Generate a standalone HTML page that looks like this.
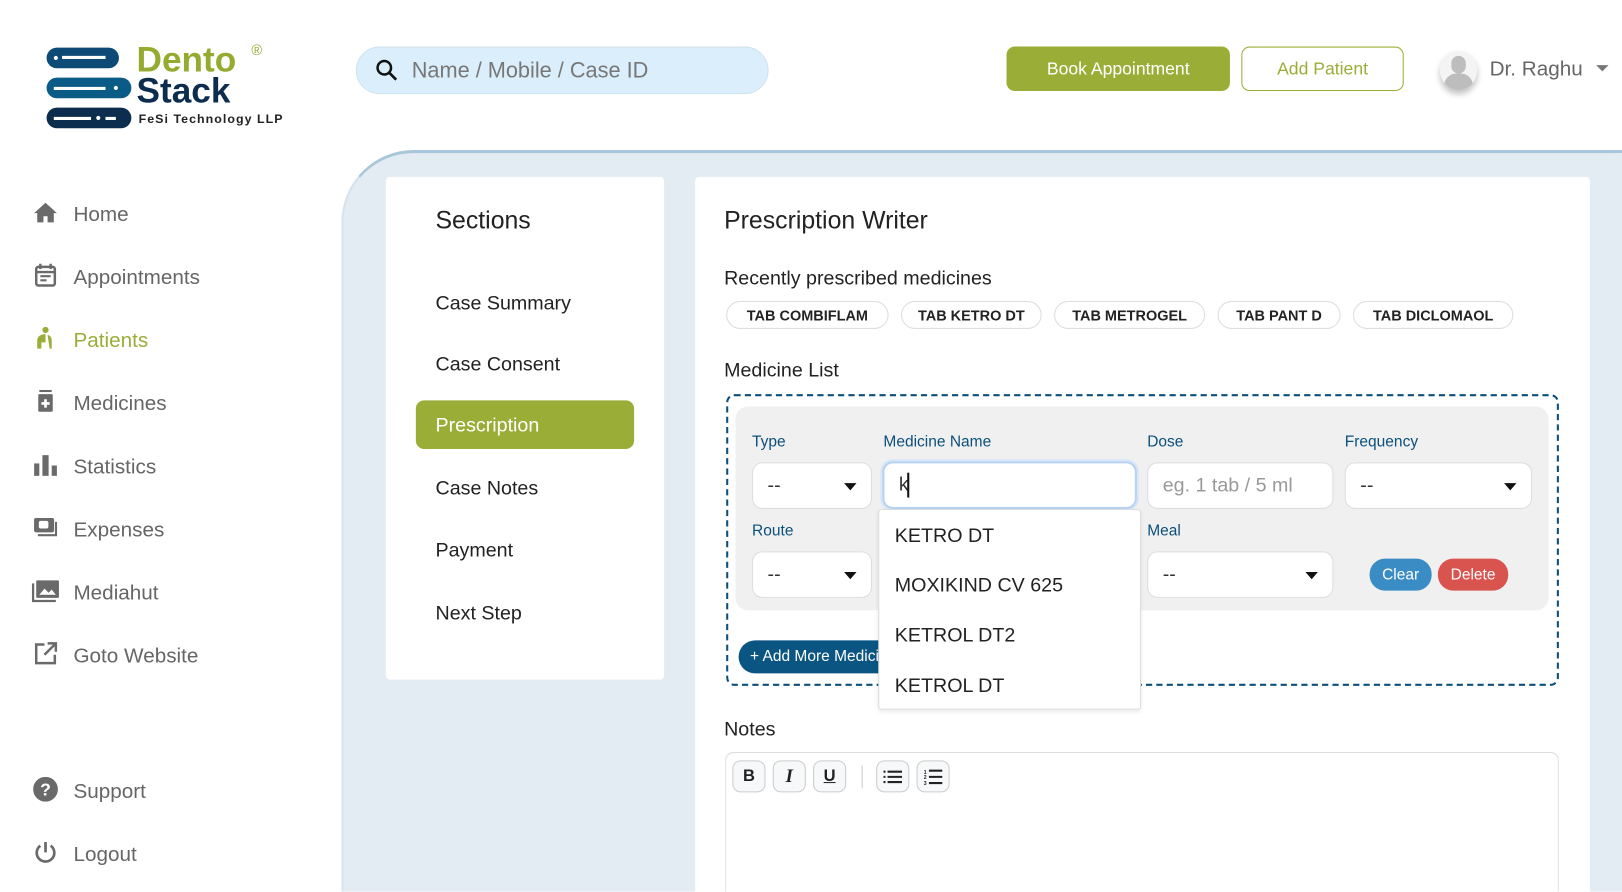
<!DOCTYPE html>
<html><head><meta charset="utf-8"><style>
*{box-sizing:border-box;margin:0;padding:0}
html,body{width:1622px;height:892px;overflow:hidden;background:#fff;font-family:"Liberation Sans",sans-serif}
#w{position:absolute;left:0;top:0;width:1568px;height:862px;transform:scale(1.03444);transform-origin:0 0;overflow:hidden}
.a{position:absolute}
.nav{position:absolute;left:71px;font-size:20px;color:#666;transform:translateY(-50%);margin-top:2px}
.ic{position:absolute;left:32px;width:24px;height:24px;transform:translateY(-50%)}
.sec{position:absolute;left:421px;font-size:19px;color:#222;transform:translateY(-50%);margin-top:2px}
.chip{position:absolute;top:291px;height:27px;border:1px solid #ddd;border-radius:14px;font-size:14px;font-weight:bold;color:#222;display:flex;align-items:center;justify-content:center;background:#fff}
.lbl{position:absolute;font-size:15px;color:#0b4f7c;transform:translateY(-50%);margin-top:1px}
.inp{position:absolute;height:45px;background:#fff;border:1px solid #ddd;border-radius:10px;font-size:19px;color:#333;padding-left:14px;display:flex;align-items:center}
.car{position:absolute;right:14px;top:19px;width:0;height:0;border-left:6px solid transparent;border-right:6px solid transparent;border-top:7px solid #111}
.dd{position:absolute;left:865px;font-size:19px;color:#222;transform:translateY(-50%);margin-top:2px}
.tb{position:absolute;top:735px;width:32px;height:31px;border:1px solid #ccc;border-radius:8px;background:#f7f8f9;display:flex;align-items:center;justify-content:center;font-size:16px;font-weight:bold;color:#222}
</style></head><body><div id="w">
<!-- logo -->
<div class="a" style="left:45px;top:46px;width:70px;height:20px;border-radius:10px;background:#0d4a75"></div>
<div class="a" style="left:52px;top:54px;width:4px;height:4px;border-radius:2px;background:#fff"></div>
<div class="a" style="left:60px;top:54px;width:42px;height:3px;background:#fff"></div>
<div class="a" style="left:45px;top:75px;width:82px;height:20px;border-radius:10px;background:#0b5b87"></div>
<div class="a" style="left:52px;top:84px;width:50px;height:3px;background:#fff"></div>
<div class="a" style="left:110px;top:83px;width:4px;height:4px;border-radius:2px;background:#fff"></div>
<div class="a" style="left:45px;top:104px;width:82px;height:20px;border-radius:10px;background:#0d2d4e"></div>
<div class="a" style="left:52px;top:113px;width:36px;height:3px;background:#fff"></div>
<div class="a" style="left:93px;top:112px;width:4px;height:4px;border-radius:2px;background:#fff"></div>
<div class="a" style="left:102px;top:113px;width:10px;height:3px;background:#fff"></div>
<div class="a" style="left:132px;top:39px;font-size:34px;font-weight:bold;color:#95ab30">Dento</div>
<div class="a" style="left:243px;top:40px;font-size:14px;color:#95ab30">®</div>
<div class="a" style="left:132px;top:69px;font-size:34px;font-weight:bold;color:#0d2d4e">Stack</div>
<div class="a" style="left:134px;top:108px;font-size:12px;font-weight:bold;color:#222;letter-spacing:1px">FeSi Technology LLP</div>
<!-- search -->
<div class="a" style="left:344px;top:45px;width:399px;height:46px;border-radius:23px;background:#dbeefb;border:1px solid #cfe2ef"></div>
<svg class="a" style="left:362px;top:56px" width="24" height="24" viewBox="0 0 24 24"><circle cx="9.5" cy="9.5" r="6.5" fill="none" stroke="#111" stroke-width="2.4"/><path d="M14.5 14.5L21 21" stroke="#111" stroke-width="2.6"/></svg>
<div class="a" style="left:398px;top:57px;font-size:21px;color:#777">Name / Mobile / Case ID</div>
<!-- top buttons -->
<div class="a" style="left:973px;top:45px;width:216px;height:43px;border-radius:8px;background:#9aae37;color:#fff;font-size:17px;display:flex;align-items:center;justify-content:center">Book Appointment</div>
<div class="a" style="left:1200px;top:45px;width:157px;height:43px;border-radius:8px;border:1px solid #9aae37;color:#9aae37;font-size:17px;display:flex;align-items:center;justify-content:center">Add Patient</div>
<div class="a" style="left:1392px;top:49px;width:36px;height:38px;border-radius:50%;background:#f4f4f4;box-shadow:0 4px 6px rgba(0,0,0,.25);overflow:hidden">
<div class="a" style="left:11px;top:5px;width:14px;height:17px;border-radius:7px;background:#bdbdbd"></div>
<div class="a" style="left:4px;top:22px;width:28px;height:20px;border-radius:12px 12px 0 0;background:#bdbdbd"></div></div>
<div class="a" style="left:1440px;top:56px;font-size:20px;color:#666">Dr. Raghu</div>
<div class="a" style="left:1543px;top:63px;border-left:6px solid transparent;border-right:6px solid transparent;border-top:6px solid #777"></div>
<!-- sidebar -->
<svg class="ic" style="top:206px" viewBox="0 0 24 24"><path d="M12 2L1 12h3v9h6v-6h4v6h6v-9h3z" fill="#6a6a6a"/></svg>
<div class="nav" style="top:206px">Home</div>
<svg class="ic" style="top:266px" viewBox="0 0 24 24"><rect x="3" y="4" width="18" height="18" rx="2" fill="none" stroke="#6a6a6a" stroke-width="2.4"/><path d="M7 1v5M17 1v5M3 9h18" stroke="#6a6a6a" stroke-width="2.4"/><path d="M7 13h10M7 17h6" stroke="#6a6a6a" stroke-width="2"/></svg>
<div class="nav" style="top:267px">Appointments</div>
<svg class="ic" style="top:327px" viewBox="0 0 24 24"><circle cx="12" cy="4" r="3" fill="#9aae37"/><path d="M4 22v-8c0-4 4-6 8-6v8H8v6z M14 9c3 0 4 3 4 6v7h-2z" fill="#9aae37"/></svg>
<div class="nav" style="top:328px;color:#9aae37">Patients</div>
<svg class="ic" style="top:388px" viewBox="0 0 24 24"><rect x="6" y="1" width="12" height="2" fill="#6a6a6a"/><rect x="5" y="5" width="14" height="17" rx="1" fill="#6a6a6a"/><path d="M12 10v8M8 14h8" stroke="#fff" stroke-width="2.6"/></svg>
<div class="nav" style="top:389px">Medicines</div>
<svg class="ic" style="top:450px" viewBox="0 0 24 24"><rect x="1" y="10" width="5" height="12" fill="#6a6a6a"/><rect x="9" y="2" width="6" height="20" fill="#6a6a6a"/><rect x="18" y="12" width="5" height="10" fill="#6a6a6a"/></svg>
<div class="nav" style="top:450px">Statistics</div>
<svg class="ic" style="top:510px" viewBox="0 0 26 24"><rect x="1" y="2" width="21" height="15" rx="2" fill="#6a6a6a"/><rect x="6" y="5" width="10" height="8" rx="2" fill="#fff"/><path d="M24 6v14H5" fill="none" stroke="#6a6a6a" stroke-width="2.2"/></svg>
<div class="nav" style="top:511px">Expenses</div>
<svg class="ic" style="top:571px;width:28px;left:30px" viewBox="0 0 28 24"><path d="M2 5v17h22" fill="none" stroke="#6a6a6a" stroke-width="2.2"/><rect x="5" y="2" width="22" height="17" rx="1" fill="#6a6a6a"/><path d="M8 16l5-6 4 4 3-3 4 5z" fill="#fff"/></svg>
<div class="nav" style="top:572px">Mediahut</div>
<svg class="ic" style="top:632px" viewBox="0 0 24 24"><path d="M11 3H3v18h18v-8" fill="none" stroke="#6a6a6a" stroke-width="2.4"/><path d="M14 2h8v8M22 2L11 13" fill="none" stroke="#6a6a6a" stroke-width="2.4"/></svg>
<div class="nav" style="top:633px">Goto Website</div>
<svg class="ic" style="top:763px" viewBox="0 0 24 24"><circle cx="12" cy="12" r="12" fill="#6a6a6a"/><text x="12" y="18" font-size="17" font-weight="bold" fill="#fff" text-anchor="middle" font-family="Liberation Sans">?</text></svg>
<div class="nav" style="top:764px">Support</div>
<svg class="ic" style="top:824px" viewBox="0 0 24 24"><path d="M12 2v10" stroke="#6a6a6a" stroke-width="2.6"/><path d="M7 5.5A8.5 8.5 0 1 0 17 5.5" fill="none" stroke="#6a6a6a" stroke-width="2.6"/></svg>
<div class="nav" style="top:825px">Logout</div>
<!-- main panel -->
<div class="a" style="left:330px;top:145px;width:1238px;height:717px;background:#e3ecf3;border-radius:70px 0 0 0;border-top:3px solid #a9c7da;border-left:2px solid #d6e4ee"></div>
<!-- sections card -->
<div class="a" style="left:373px;top:171px;width:269px;height:486px;background:#fff;border-radius:4px"></div>
<div class="a" style="left:421px;top:200px;font-size:24px;color:#222">Sections</div>
<div class="sec" style="top:292px">Case Summary</div>
<div class="sec" style="top:351px">Case Consent</div>
<div class="a" style="left:402px;top:387px;width:211px;height:47px;border-radius:8px;background:#9aae37"></div>
<div class="sec" style="top:410px;color:#fff">Prescription</div>
<div class="sec" style="top:471px">Case Notes</div>
<div class="sec" style="top:531px">Payment</div>
<div class="sec" style="top:592px">Next Step</div>
<!-- prescription card -->
<div class="a" style="left:672px;top:171px;width:865px;height:691px;background:#fff;border-radius:4px 4px 0 0"></div>
<div class="a" style="left:700px;top:200px;font-size:24px;color:#222">Prescription Writer</div>
<div class="a" style="left:700px;top:259px;font-size:19px;color:#222">Recently prescribed medicines</div>
<div class="chip" style="left:702px;width:157px">TAB COMBIFLAM</div>
<div class="chip" style="left:871px;width:136px">TAB KETRO DT</div>
<div class="chip" style="left:1019px;width:146px">TAB METROGEL</div>
<div class="chip" style="left:1177px;width:119px">TAB PANT D</div>
<div class="chip" style="left:1308px;width:155px">TAB DICLOMAOL</div>
<div class="a" style="left:700px;top:348px;font-size:19px;color:#222">Medicine List</div>
<div class="a" style="left:702px;top:381px;width:805px;height:282px;border:2px dashed #0b4f7c;border-radius:8px"></div>
<div class="a" style="left:711px;top:393px;width:786px;height:197px;background:#f0f0f0;border-radius:12px"></div>
<div class="lbl" style="left:727px;top:426px">Type</div>
<div class="lbl" style="left:854px;top:426px">Medicine Name</div>
<div class="lbl" style="left:1109px;top:426px">Dose</div>
<div class="lbl" style="left:1300px;top:426px">Frequency</div>
<div class="inp" style="left:727px;top:447px;width:116px">--<div class="car"></div></div>
<div class="inp" style="left:853px;top:446px;width:246px;height:46px;border:2px solid #b8d2f0;box-shadow:0 0 0 2px #d7e6f8">k<span style="display:inline-block;width:2px;height:24px;background:#111;margin-left:-2px"></span></div>
<div class="inp" style="left:1109px;top:447px;width:180px;color:#999">eg. 1 tab / 5 ml</div>
<div class="inp" style="left:1300px;top:447px;width:181px">--<div class="car"></div></div>
<div class="lbl" style="left:727px;top:512px">Route</div>
<div class="lbl" style="left:1109px;top:512px">Meal</div>
<div class="inp" style="left:727px;top:533px;width:116px">--<div class="car"></div></div>
<div class="inp" style="left:1109px;top:533px;width:180px">--<div class="car"></div></div>
<div class="a" style="left:1324px;top:540px;width:60px;height:31px;border-radius:15px;background:#3a8cc4;color:#fff;font-size:15px;display:flex;align-items:center;justify-content:center">Clear</div>
<div class="a" style="left:1390px;top:540px;width:68px;height:31px;border-radius:15px;background:#d9534f;color:#fff;font-size:15px;display:flex;align-items:center;justify-content:center">Delete</div>
<div class="a" style="left:714px;top:619px;width:150px;height:32px;border-radius:16px 0 0 16px;background:#0b5583;color:#fff;font-size:15px;padding-left:11px;line-height:32px;overflow:hidden;white-space:nowrap">+ Add More Medicine</div>
<!-- dropdown -->
<div class="a" style="left:849px;top:492px;width:254px;height:194px;background:#fff;border:1px solid #ddd;border-radius:3px;box-shadow:0 2px 4px rgba(0,0,0,.08)"></div>
<div class="dd" style="top:517px">KETRO DT</div>
<div class="dd" style="top:565px">MOXIKIND CV 625</div>
<div class="dd" style="top:613px">KETROL DT2</div>
<div class="dd" style="top:662px">KETROL DT</div>
<!-- notes -->
<div class="a" style="left:700px;top:695px;font-size:19px;color:#222">Notes</div>
<div class="a" style="left:701px;top:727px;width:806px;height:135px;border:1px solid #ddd;border-bottom:none;border-radius:8px 8px 0 0"></div>
<div class="tb" style="left:708px">B</div>
<div class="tb" style="left:747px;font-style:italic;font-family:'Liberation Serif',serif;font-size:18px">I</div>
<div class="tb" style="left:786px;text-decoration:underline">U</div>
<div class="a" style="left:833px;top:740px;width:1px;height:22px;background:#ccc"></div>
<div class="tb" style="left:847px"><svg width="18" height="14" viewBox="0 0 18 14"><path d="M0 2h2M0 7h2M0 12h2M4 2h14M4 7h14M4 12h14" stroke="#222" stroke-width="2"/></svg></div>
<div class="tb" style="left:886px"><svg width="18" height="16" viewBox="0 0 18 16"><path d="M5 2h13M5 8h13M5 14h13" stroke="#222" stroke-width="2"/><text x="0" y="5" font-size="5" fill="#222">1</text><text x="0" y="10" font-size="5" fill="#222">2</text><text x="0" y="16" font-size="5" fill="#222">3</text></svg></div>
</div></body></html>
